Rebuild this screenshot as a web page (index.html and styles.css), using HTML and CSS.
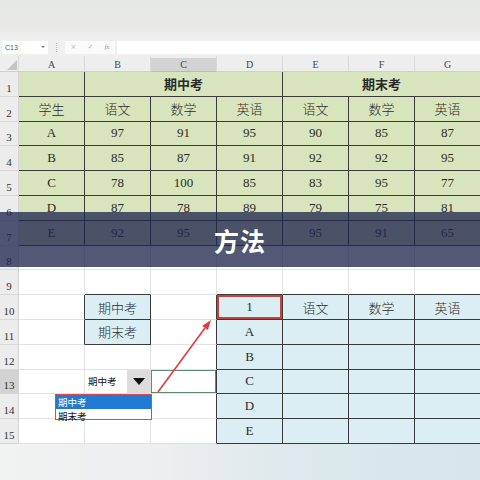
FILE: index.html
```html
<!DOCTYPE html>
<html lang="zh">
<head>
<meta charset="utf-8">
<link rel="stylesheet" href="styles.css">
</head>
<body>
<div class="page">
  <div class="topblur"></div>
  <div class="fbar">
    <div class="namebox"><span>C13</span><span class="nbarrow"></span></div>
    <div class="fsep"></div>
    <div class="fbtns"><span>×</span><span>✓</span><span class="fx">fx</span></div>
    <div class="finput"></div>
  </div>
  <div class="sheet">
    <div class="ch corner"><span class="tri"></span></div>
    <div class="ch">A</div><div class="ch">B</div><div class="ch sel">C</div><div class="ch">D</div><div class="ch">E</div><div class="ch">F</div><div class="ch">G</div>

    <div class="rh">1</div>
    <div class="c g"></div><div class="c g bold span3">期中考</div><div class="c g bold span3">期末考</div>

    <div class="rh">2</div>
    <div class="c g">学生</div><div class="c g">语文</div><div class="c g">数学</div><div class="c g">英语</div><div class="c g">语文</div><div class="c g">数学</div><div class="c g">英语</div>

    <div class="rh">3</div>
    <div class="c g">A</div><div class="c g">97</div><div class="c g">91</div><div class="c g">95</div><div class="c g">90</div><div class="c g">85</div><div class="c g">87</div>

    <div class="rh">4</div>
    <div class="c g">B</div><div class="c g">85</div><div class="c g">87</div><div class="c g">91</div><div class="c g">92</div><div class="c g">92</div><div class="c g">95</div>

    <div class="rh">5</div>
    <div class="c g">C</div><div class="c g">78</div><div class="c g">100</div><div class="c g">85</div><div class="c g">83</div><div class="c g">95</div><div class="c g">77</div>

    <div class="rh">6</div>
    <div class="c g">D</div><div class="c g">87</div><div class="c g">78</div><div class="c g">89</div><div class="c g">79</div><div class="c g">75</div><div class="c g">81</div>

    <div class="rh">7</div>
    <div class="c g">E</div><div class="c g">92</div><div class="c g">95</div><div class="c g"></div><div class="c g">95</div><div class="c g">91</div><div class="c g">65</div>

    <div class="rh">8</div>
    <div class="c"></div><div class="c"></div><div class="c"></div><div class="c"></div><div class="c"></div><div class="c"></div><div class="c"></div>

    <div class="rh">9</div>
    <div class="c"></div><div class="c db"></div><div class="c"></div><div class="c db"></div><div class="c db"></div><div class="c db"></div><div class="c db"></div>

    <div class="rh">10</div>
    <div class="c dr"></div><div class="c b">期中考</div><div class="c dr"></div><div class="c b red">1</div><div class="c b">语文</div><div class="c b">数学</div><div class="c b">英语</div>

    <div class="rh">11</div>
    <div class="c dr"></div><div class="c b">期末考</div><div class="c dr"></div><div class="c b">A</div><div class="c b"></div><div class="c b"></div><div class="c b"></div>

    <div class="rh">12</div>
    <div class="c"></div><div class="c"></div><div class="c dr"></div><div class="c b">B</div><div class="c b"></div><div class="c b"></div><div class="c b"></div>

    <div class="rh sel">13</div>
    <div class="c"></div>
    <div class="c dd"><span class="ddtext">期中考</span><span class="ddbtn"><span class="ddtri"></span></span></div>
    <div class="c dr active"></div><div class="c b">C</div><div class="c b"></div><div class="c b"></div><div class="c b"></div>

    <div class="rh">14</div>
    <div class="c"></div><div class="c"></div><div class="c dr"></div><div class="c b">D</div><div class="c b"></div><div class="c b"></div><div class="c b"></div>

    <div class="rh">15</div>
    <div class="c"></div><div class="c"></div><div class="c dr"></div><div class="c b">E</div><div class="c b"></div><div class="c b"></div><div class="c b"></div>
  </div>
  <div class="bottomblur"></div>

  <div class="ddlist">
    <div class="ddopt on">期中考</div>
    <div class="ddopt">期末考</div>
  </div>

  <svg class="arrow" width="480" height="480" viewBox="0 0 480 480">
    <line x1="158" y1="392" x2="205" y2="328" stroke="#e23b3b" stroke-width="1.6"/>
    <polygon points="211,320 207.9,330.1 202.2,326" fill="#e23b3b"/>
  </svg>

  <div class="banner">方法</div>
</div>
</body>
</html>
```

FILE: styles.css
```css
html, body {
  margin: 0;
  padding: 0;
  width: 480px;
  height: 480px;
  overflow: hidden;
  background: #f2f3f3;
}

.page {
  position: relative;
  width: 480px;
  height: 480px;
  overflow: hidden;
  display: flex;
  flex-direction: column;
  font-family: "Liberation Serif", "Noto Sans CJK SC", serif;
  color: #222;
}

.topblur {
  height: 38px;
  flex: none;
  background: linear-gradient(180deg, #e6e8e5 0%, #e9eae8 70%, #eeeeee 100%);
}

.fbar {
  height: 18px;
  flex: none;
  display: flex;
  align-items: center;
  background: #efefef;
  padding: 0 0 0 2px;
  box-sizing: border-box;
}

.namebox {
  width: 46px;
  height: 13px;
  background: #ffffff;
  display: flex;
  align-items: center;
  justify-content: space-between;
  padding: 0 3px;
  box-sizing: border-box;
  font-family: "Liberation Sans", sans-serif;
  font-size: 7px;
  color: #555;
}

.nbarrow {
  width: 0;
  height: 0;
  border-left: 2px solid transparent;
  border-right: 2px solid transparent;
  border-top: 2px solid #777;
}

.fsep {
  width: 1px;
  height: 9px;
  margin: 0 7px 0 8px;
  border-left: 1px dotted #bbb;
}

.fbtns {
  width: 50px;
  height: 13px;
  background: #fafafa;
  display: flex;
  align-items: center;
  justify-content: space-around;
  font-family: "DejaVu Sans", sans-serif;
  font-size: 7px;
  color: #b5b5b5;
}

.fbtns .fx {
  font-family: "Liberation Serif", serif;
  font-style: italic;
  color: #999;
}

.finput {
  flex: 1;
  height: 13px;
  margin-left: 2px;
  background: #ffffff;
}

.sheet {
  flex: none;
  display: grid;
  grid-template-columns: 19px repeat(7, 66px);
  grid-template-rows: 16px repeat(15, 24.8px);
  width: 481px;
  background: #ffffff;
}

.ch {
  background: #eeeeee;
  border-right: 1px solid #d9d9d9;
  border-bottom: 1px solid #cfcfcf;
  box-sizing: border-box;
  display: flex;
  align-items: flex-end;
  justify-content: center;
  padding-bottom: 1px;
  font-family: "Liberation Serif", serif;
  font-size: 10px;
  color: #444;
}

.ch.sel {
  background: linear-gradient(180deg, #eeeeee 0, #eeeeee 2px, #d3d3d3 2px);
  border-bottom: 1px solid #b9b9b9;
}

.corner {
  justify-content: flex-end;
  align-items: flex-end;
  padding: 0 1px 1px 0;
}

.tri {
  width: 0;
  height: 0;
  border-left: 10px solid transparent;
  border-bottom: 10px solid #c4c4c4;
}

.rh {
  background: #ececec;
  border-right: 1px solid #d4d4d4;
  border-bottom: 1px solid #d7d7d7;
  box-sizing: border-box;
  display: flex;
  align-items: flex-end;
  justify-content: center;
  padding-bottom: 2px;
  font-family: "Liberation Serif", serif;
  font-size: 11px;
  color: #333;
}

.rh.sel {
  background: #d2d2d2;
}

.c {
  box-sizing: border-box;
  border-right: 1px solid #e2e2e2;
  border-bottom: 1px solid #e2e2e2;
  display: flex;
  align-items: center;
  justify-content: center;
  font-size: 13px;
  font-weight: 300;
  color: #2a2a2a;
  background: #ffffff;
}

.g {
  background: #d8e4bc;
  border-right-color: #3a3a3a;
  border-bottom-color: #3a3a3a;
}

.b {
  background: #daeef3;
  border-right-color: #3a3a3a;
  border-bottom-color: #3a3a3a;
}

.dr { border-right-color: #3a3a3a; }
.db { border-bottom-color: #3a3a3a; }

.c.bold { font-weight: 700; }
.span3 { grid-column: span 3; }

.red {
  box-shadow: inset 0 0 0 2px #c8413c;
}

.active {
  box-shadow: inset 0 0 0 1px #5e8a70;
}

.dd {
  justify-content: space-between;
  padding-left: 3px;
}

.ddtext {
  font-family: "Noto Sans CJK SC", sans-serif;
  font-size: 9.5px;
  font-weight: 400;
  color: #111;
}

.ddbtn {
  width: 23px;
  align-self: stretch;
  background: #dcdcdc;
  display: flex;
  align-items: center;
  justify-content: center;
}

.ddtri {
  width: 0;
  height: 0;
  border-left: 6px solid transparent;
  border-right: 6px solid transparent;
  border-top: 7px solid #111;
}

.bottomblur {
  flex: 1;
  background: linear-gradient(90deg, #f1f2f2 0%, #eceeef 35%, #dde9ed 60%, #d6e6eb 100%);
}

.ddlist {
  position: absolute;
  left: 55px;
  top: 394px;
  width: 97px;
  height: 26px;
  box-sizing: border-box;
  border: 1.5px solid #d9474f;
  background: #ffffff;
  display: flex;
  flex-direction: column;
  font-family: "Noto Sans CJK SC", sans-serif;
  font-size: 9.5px;
}

.ddopt {
  flex: 1;
  display: flex;
  align-items: center;
  padding-left: 2px;
  color: #111;
}

.ddopt.on {
  background: #1f7ad3;
  color: #ffffff;
}

.arrow {
  position: absolute;
  left: 0;
  top: 0;
  pointer-events: none;
}

.banner {
  position: absolute;
  left: 0;
  top: 212px;
  width: 480px;
  height: 55px;
  background: rgba(33, 38, 78, 0.77);
  display: flex;
  align-items: center;
  justify-content: center;
  font-family: "Noto Sans CJK SC", sans-serif;
  font-weight: 700;
  font-size: 25px;
  color: #ffffff;
  letter-spacing: 1px;
}
```
